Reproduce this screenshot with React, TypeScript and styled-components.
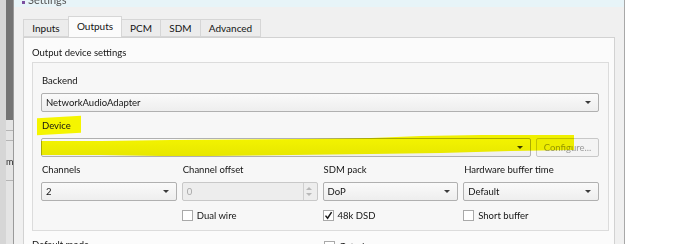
import { FC, ReactNode } from "react";
import styled, { createGlobalStyle } from "styled-components";

const GlobalStyle = createGlobalStyle`
  html, body {
    margin: 0;
    padding: 0;
    background: #ffffff;
    width: 690px;
    height: 244px;
    overflow: hidden;
  }
  body {
    font-family: Lato, "Noto Sans", sans-serif;
    font-size: 9.5px;
    color: #141414;
  }
`;

const Page = styled.div`
  display: flex;
  height: 244px;
  overflow: hidden;
`;

const BackWindow = styled.div`
  width: 13px;
  flex-shrink: 0;
  display: flex;
  flex-direction: column;
  background: #d6d6d6;
  border-right: 1px solid #9a9a9a;
`;

const BackTop = styled.div`
  height: 120px;
  margin-left: 6px;
  background: #747474;
`;

const BackBottom = styled.div`
  flex: 1;
  margin-left: 6px;
  background: linear-gradient(
    #e4e4e4 0 10px,
    #b4b4b4 10px 11px,
    #e4e4e4 11px 20px,
    #b4b4b4 20px 21px,
    #e4e4e4 21px 60px,
    #b4b4b4 60px 61px,
    #e4e4e4 61px
  );
  font-size: 9px;
  color: #222;
  padding-top: 36px;
  overflow: hidden;
`;

const Dialog = styled.div`
  width: 610px;
  flex-shrink: 0;
  display: flex;
  flex-direction: column;
  background: #f0f0f0;
  border-right: 1px solid #a8a8a8;
`;

const TitleBar = styled.div`
  height: 7px;
  flex-shrink: 0;
  background: #e7f4f8;
  display: flex;
  align-items: flex-end;
  gap: 3px;
  padding-left: 8px;
  overflow: hidden;
`;

const TitleIcon = styled.div`
  width: 3px;
  height: 3px;
  background: #7b4fa0;
  margin-bottom: 3px;
`;

const TitleText = styled.div`
  font-size: 11px;
  line-height: 11px;
  margin-bottom: 2px;
  color: #555;
`;

const Body = styled.div`
  flex: 1;
  min-height: 0;
  padding: 10px 9px 0 9px;
  display: flex;
  flex-direction: column;
`;

const TabBar = styled.div`
  display: flex;
  flex-shrink: 0;
  align-items: flex-end;
  height: 20px;
  position: relative;
  z-index: 1;
`;

const Tab = styled.div<{ $active?: boolean; $w: number }>`
  width: ${(p) => p.$w}px;
  height: ${(p) => (p.$active ? 21 : 18)}px;
  box-sizing: border-box;
  display: flex;
  align-items: center;
  justify-content: center;
  border: 1px solid #d6d6d6;
  border-bottom: ${(p) => (p.$active ? "none" : "1px solid #d6d6d6")};
  margin-left: -1px;
  background: ${(p) => (p.$active ? "#fbfbfb" : "#ececec")};
  color: #141414;
  font-size: 10px;
  padding-bottom: ${(p) => (p.$active ? 2 : 0)}px;
  &:first-child {
    margin-left: 0;
  }
`;

const Pane = styled.div`
  flex: 1;
  min-height: 0;
  background: #fbfbfb;
  border: 1px solid #d2d2d2;
  border-bottom: none;
  display: flex;
  flex-direction: column;
  padding: 8px 5px 0 8px;
`;

const SectionTitle = styled.div`
  height: 14px;
  flex-shrink: 0;
  line-height: 14px;
`;

const GroupBox = styled.div`
  margin-top: 2px;
  height: 169px;
  flex-shrink: 0;
  box-sizing: border-box;
  border: 1px solid #dcdcdc;
  background: #f7f7f7;
  padding: 11px 9px 0 8px;
  display: flex;
  flex-direction: column;
`;

const Label = styled.div<{ $mark?: boolean }>`
  height: 13px;
  line-height: 13px;
  padding-left: 1px;
  position: relative;
  z-index: 0;
  margin-bottom: 6px;
  width: max-content;
  white-space: nowrap;
  ${(p) =>
    p.$mark &&
    `
    &::before {
      content: "";
      position: absolute;
      left: -4px;
      right: -10px;
      top: -2px;
      bottom: -2px;
      background: #f5f500;
      z-index: -1;
      transform: skewY(-3deg);
    }
  `}
`;

const FieldSpacer = styled.div`
  height: 7px;
`;

const Combo = styled.div<{ $disabled?: boolean }>`
  height: 19px;
  box-sizing: border-box;
  border: 1px solid ${(p) => (p.$disabled ? "#c8c8c8" : "#b0b0b0")};
  border-radius: 2px;
  background: ${(p) =>
    p.$disabled ? "#ededed" : "linear-gradient(#fafafa, #eeeeee)"};
  display: flex;
  align-items: center;
  padding-left: 4px;
  color: ${(p) => (p.$disabled ? "#a8a8a8" : "#141414")};
  min-width: 0;
`;

const ComboText = styled.span`
  flex: 1;
  white-space: nowrap;
  overflow: hidden;
`;

const Arrow = styled.span`
  width: 0;
  height: 0;
  border-left: 3px solid transparent;
  border-right: 3px solid transparent;
  border-top: 3px solid #3a3a3a;
  margin-right: 7px;
`;

const SpinButtons = styled.div`
  width: 11px;
  height: 100%;
  border-left: 1px solid #cfcfcf;
  display: flex;
  flex-direction: column;
  align-items: center;
  justify-content: center;
  gap: 3px;
  margin-right: 2px;
`;

const SpinUp = styled.span`
  border-left: 3px solid transparent;
  border-right: 3px solid transparent;
  border-bottom: 3px solid #b8b8b8;
`;

const SpinDown = styled.span`
  border-left: 3px solid transparent;
  border-right: 3px solid transparent;
  border-top: 3px solid #b8b8b8;
`;

const DeviceRow = styled.div`
  display: flex;
  gap: 5px;
  position: relative;
  & > :first-child {
    flex: 1;
  }
`;

const Button = styled.div<{ $disabled?: boolean }>`
  width: 63px;
  height: 19px;
  box-sizing: border-box;
  border: 1px solid #c8c8c8;
  border-radius: 2px;
  background: #f4f4f4;
  color: ${(p) => (p.$disabled ? "#9a9a9a" : "#141414")};
  display: flex;
  align-items: center;
  justify-content: center;
`;

const Highlight = styled.svg`
  position: absolute;
  left: 0;
  top: -3px;
  pointer-events: none;
  overflow: visible;
  mix-blend-mode: multiply;
`;

const Grid = styled.div`
  display: grid;
  grid-template-columns: repeat(4, 1fr);
  column-gap: 5px;
  margin-top: 6px;
`;

const Cell = styled.div`
  display: flex;
  flex-direction: column;
  min-width: 0;
`;

const CheckRow = styled.div`
  display: flex;
  align-items: center;
  gap: 4px;
  height: 14px;
  margin-top: 7px;
`;

const Box = styled.span`
  width: 11px;
  height: 11px;
  box-sizing: border-box;
  border: 1px solid #a9a9a9;
  background: #ffffff;
  display: flex;
  align-items: center;
  justify-content: center;
`;

const CheckText = styled.span`
  white-space: nowrap;
`;

const BelowRow = styled.div`
  display: grid;
  flex-shrink: 0;
  grid-template-columns: 292px 1fr;
  margin-top: 1px;
  align-items: start;
`;

const BelowLabel = styled.div`
  margin-top: 6px;
  height: 13px;
  line-height: 13px;
`;

const Tick: FC = () => (
  <svg width="9" height="9" viewBox="0 0 9 9">
    <path d="M1.5 4.6 L3.6 7.2 L7.6 1.2" fill="none" stroke="#1a1a1a" strokeWidth="1.5" />
  </svg>
);

const Check: FC<{ checked?: boolean; children?: ReactNode }> = ({ checked, children }) => (
  <CheckRow>
    <Box>{checked && <Tick />}</Box>
    <CheckText>{children}</CheckText>
  </CheckRow>
);

const Select: FC<{ value: string }> = ({ value }) => (
  <Combo>
    <ComboText>{value}</ComboText>
    <Arrow />
  </Combo>
);

const tabs = [
  { title: "Inputs", w: 46 },
  { title: "Outputs", w: 54 },
  { title: "PCM", w: 40 },
  { title: "SDM", w: 41 },
  { title: "Advanced", w: 61 },
];

const App: FC = () => {
  return (
    <>
      <GlobalStyle />
      <Page>
        <BackWindow>
          <BackTop />
          <BackBottom>m</BackBottom>
        </BackWindow>
        <Dialog>
          <TitleBar>
            <TitleIcon />
            <TitleText>Settings</TitleText>
          </TitleBar>
          <Body>
            <TabBar>
              {tabs.map((t) => (
                <Tab key={t.title} $w={t.w} $active={t.title === "Outputs"}>
                  {t.title}
                </Tab>
              ))}
            </TabBar>
            <Pane>
              <SectionTitle>Output device settings</SectionTitle>
              <GroupBox>
                <Label>Backend</Label>
                <Select value="NetworkAudioAdapter" />
                <FieldSpacer />
                <Label $mark>Device</Label>
                <DeviceRow>
                  <Select value="" />
                  <Button $disabled>Configure...</Button>
                  <Highlight width="540" height="22" viewBox="0 0 540 22">
                    <path
                      d="M0 6 L60 6 L130 5 L260 4 L330 3 L380 1 L440 0 L533 0 L533 15 L470 16 L400 18 L330 19 L250 20 L170 21 L120 21 L60 20 L0 20 Z"
                      fill="#f8f800"
                    />
                  </Highlight>
                </DeviceRow>
                <Grid>
                  <Cell>
                    <Label>Channels</Label>
                    <Select value="2" />
                  </Cell>
                  <Cell>
                    <Label>Channel offset</Label>
                    <Combo $disabled>
                      <ComboText>0</ComboText>
                      <SpinButtons>
                        <SpinUp />
                        <SpinDown />
                      </SpinButtons>
                    </Combo>
                    <Check>Dual wire</Check>
                  </Cell>
                  <Cell>
                    <Label>SDM pack</Label>
                    <Select value="DoP" />
                    <Check checked>48k DSD</Check>
                  </Cell>
                  <Cell>
                    <Label>Hardware buffer time</Label>
                    <Select value="Default" />
                    <Check>Short buffer</Check>
                  </Cell>
                </Grid>
              </GroupBox>
              <BelowRow>
                <BelowLabel>Default mode</BelowLabel>
                <Check>Gated</Check>
              </BelowRow>
            </Pane>
          </Body>
        </Dialog>
      </Page>
    </>
  );
};

export default App;
